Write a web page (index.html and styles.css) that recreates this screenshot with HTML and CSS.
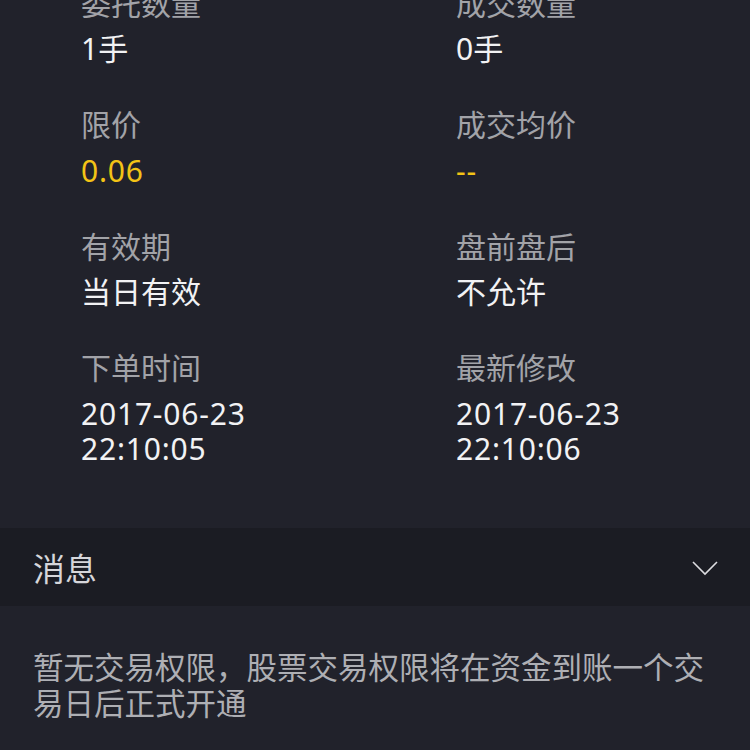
FILE: index.html
```html
<!DOCTYPE html>
<html lang="zh-CN">
  <head>
    <meta charset="utf-8">
    <title>订单详情</title>
    <link rel="stylesheet" href="styles.css">
  </head>
  <body>

    <!-- Order details -->
    <div class="detail-grid">
      <div class="item">
        <div class="label">委托数量</div>
        <div class="value">1手</div>
      </div>
      <div class="item">
        <div class="label">成交数量</div>
        <div class="value">0手</div>
      </div>
      <div class="item">
        <div class="label">限价</div>
        <div class="value num highlight">0.06</div>
      </div>
      <div class="item">
        <div class="label">成交均价</div>
        <div class="value num highlight">--</div>
      </div>
      <div class="item">
        <div class="label">有效期</div>
        <div class="value">当日有效</div>
      </div>
      <div class="item">
        <div class="label">盘前盘后</div>
        <div class="value">不允许</div>
      </div>
      <div class="item">
        <div class="label">下单时间</div>
        <div class="value num">2017-06-23<br>22:10:05</div>
      </div>
      <div class="item">
        <div class="label">最新修改</div>
        <div class="value num">2017-06-23<br>22:10:06</div>
      </div>
    </div>

    <!-- Messages -->
    <div class="section-header">
      <span class="section-title">消息</span>
      <svg class="chevron" width="26" height="15" viewBox="0 0 26 15">
        <polyline points="1,1 13,13 25,1" fill="none" stroke="#dcdce0" stroke-width="1.6"/>
      </svg>
    </div>
    <div class="message">暂无交易权限，股票交易权限将在资金到账一个交易日后正式开通</div>

  </body>
</html>
```

FILE: styles.css
```css
body {
  margin: 0;
  background-color: #21222b;
  font-family: "Noto Sans", "Noto Sans CJK SC", sans-serif;
  overflow: hidden;
}

/* Order detail grid */
.detail-grid {
  display: grid;
  grid-template-columns: 375px 375px;
  row-gap: 41px;
  margin-top: -14px;
  padding: 0 0 62px 0;
}

.item {
  padding-left: 81px;
}

.label {
  font-size: 30px;
  line-height: 35px;
  color: #a2a3a8;
  margin-bottom: 10px;
}

.value {
  font-size: 30px;
  line-height: 35px;
  color: #f2f2f4;
}

.value.num {
  letter-spacing: 0.8px;
  padding-top: 1px;
}

.value.highlight {
  color: #f3c316;
}

/* Messages section */
.section-header {
  display: flex;
  justify-content: space-between;
  align-items: center;
  height: 78px;
  padding: 0 32px 0 33px;
  background-color: #1b1c23;
}

.section-title {
  font-size: 32px;
  color: #d6d6da;
}

.chevron {
  display: block;
  margin-top: 2px;
}

.message {
  padding: 43px 33px 0 33px;
  font-size: 30.5px;
  line-height: 36px;
  color: #aeafb4;
}
```
